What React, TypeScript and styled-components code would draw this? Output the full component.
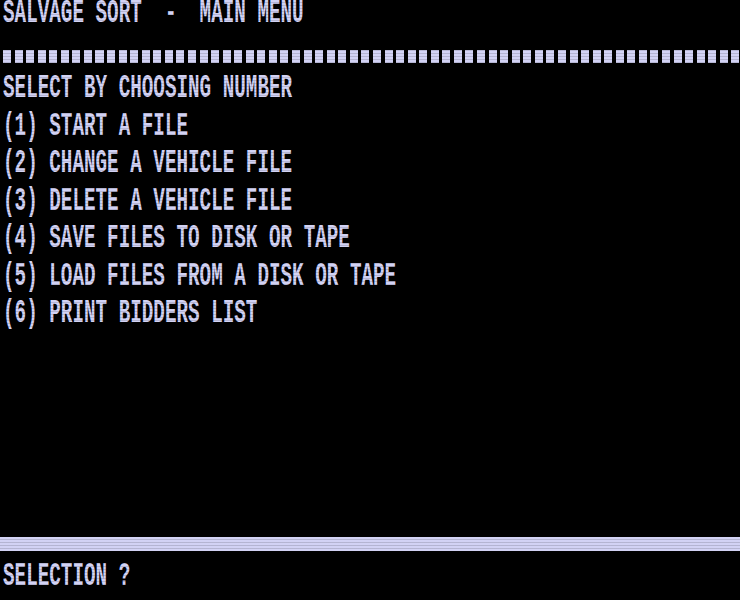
import React from "react";
import styled, { createGlobalStyle } from "styled-components";

const Global = createGlobalStyle`
  html, body { margin: 0; padding: 0; background: #000; }
  body { width: 740px; height: 600px; overflow: hidden; }
`;

const FG = "#d2d2f4";
const CELL = 740 / 64;

const Screen = styled.div`
  position: relative;
  width: 740px;
  height: 600px;
  background: #000;
  display: grid;
  grid-template-rows: repeat(16, 37.5px);
  overflow: hidden;
`;

const Row = styled.div`
  display: flex;
  align-items: flex-start;
  padding-left: 3px;
`;

const Text = styled.span`
  display: inline-block;
  white-space: pre;
  font-family: "Liberation Mono", "DejaVu Sans Mono", monospace;
  font-weight: bold;
  font-size: 34px;
  line-height: 26px;
  color: ${FG};
  transform: scaleX(${CELL / (0.6 * 34)});
  transform-origin: left top;
`;

const RuleRow = styled.div`
  display: flex;
  align-items: center;
`;

const Dots = styled.div`
  width: 100%;
  height: 13px;
  margin-left: 3px;
  background: repeating-linear-gradient(
    to right,
    ${FG} 0 8px,
    transparent 8px ${CELL}px
  );
`;

const Bar = styled.div`
  width: 100%;
  height: 14px;
  background: ${FG};
`;

const Scanlines = styled.div`
  position: absolute;
  inset: 0;
  pointer-events: none;
  background: repeating-linear-gradient(
    to bottom,
    transparent 0 2px,
    rgba(0, 0, 0, 0.14) 2px 3px
  );
`;

const items = [
  "(1) START A FILE",
  "(2) CHANGE A VEHICLE FILE",
  "(3) DELETE A VEHICLE FILE",
  "(4) SAVE FILES TO DISK OR TAPE",
  "(5) LOAD FILES FROM A DISK OR TAPE",
  "(6) PRINT BIDDERS LIST",
];

export default function App() {
  const blanks = 16 - 3 - items.length - 2;
  return (
    <>
      <Global />
      <Screen>
        <Row>
          <Text>SALVAGE SORT  -  MAIN MENU</Text>
        </Row>
        <RuleRow>
          <Dots />
        </RuleRow>
        <Row>
          <Text>SELECT BY CHOOSING NUMBER</Text>
        </Row>
        {items.map((t) => (
          <Row key={t}>
            <Text>{t}</Text>
          </Row>
        ))}
        {Array.from({ length: blanks }).map((_, i) => (
          <Row key={"b" + i} />
        ))}
        <RuleRow>
          <Bar />
        </RuleRow>
        <Row>
          <Text>SELECTION ?</Text>
        </Row>
        <Scanlines />
      </Screen>
    </>
  );
}
